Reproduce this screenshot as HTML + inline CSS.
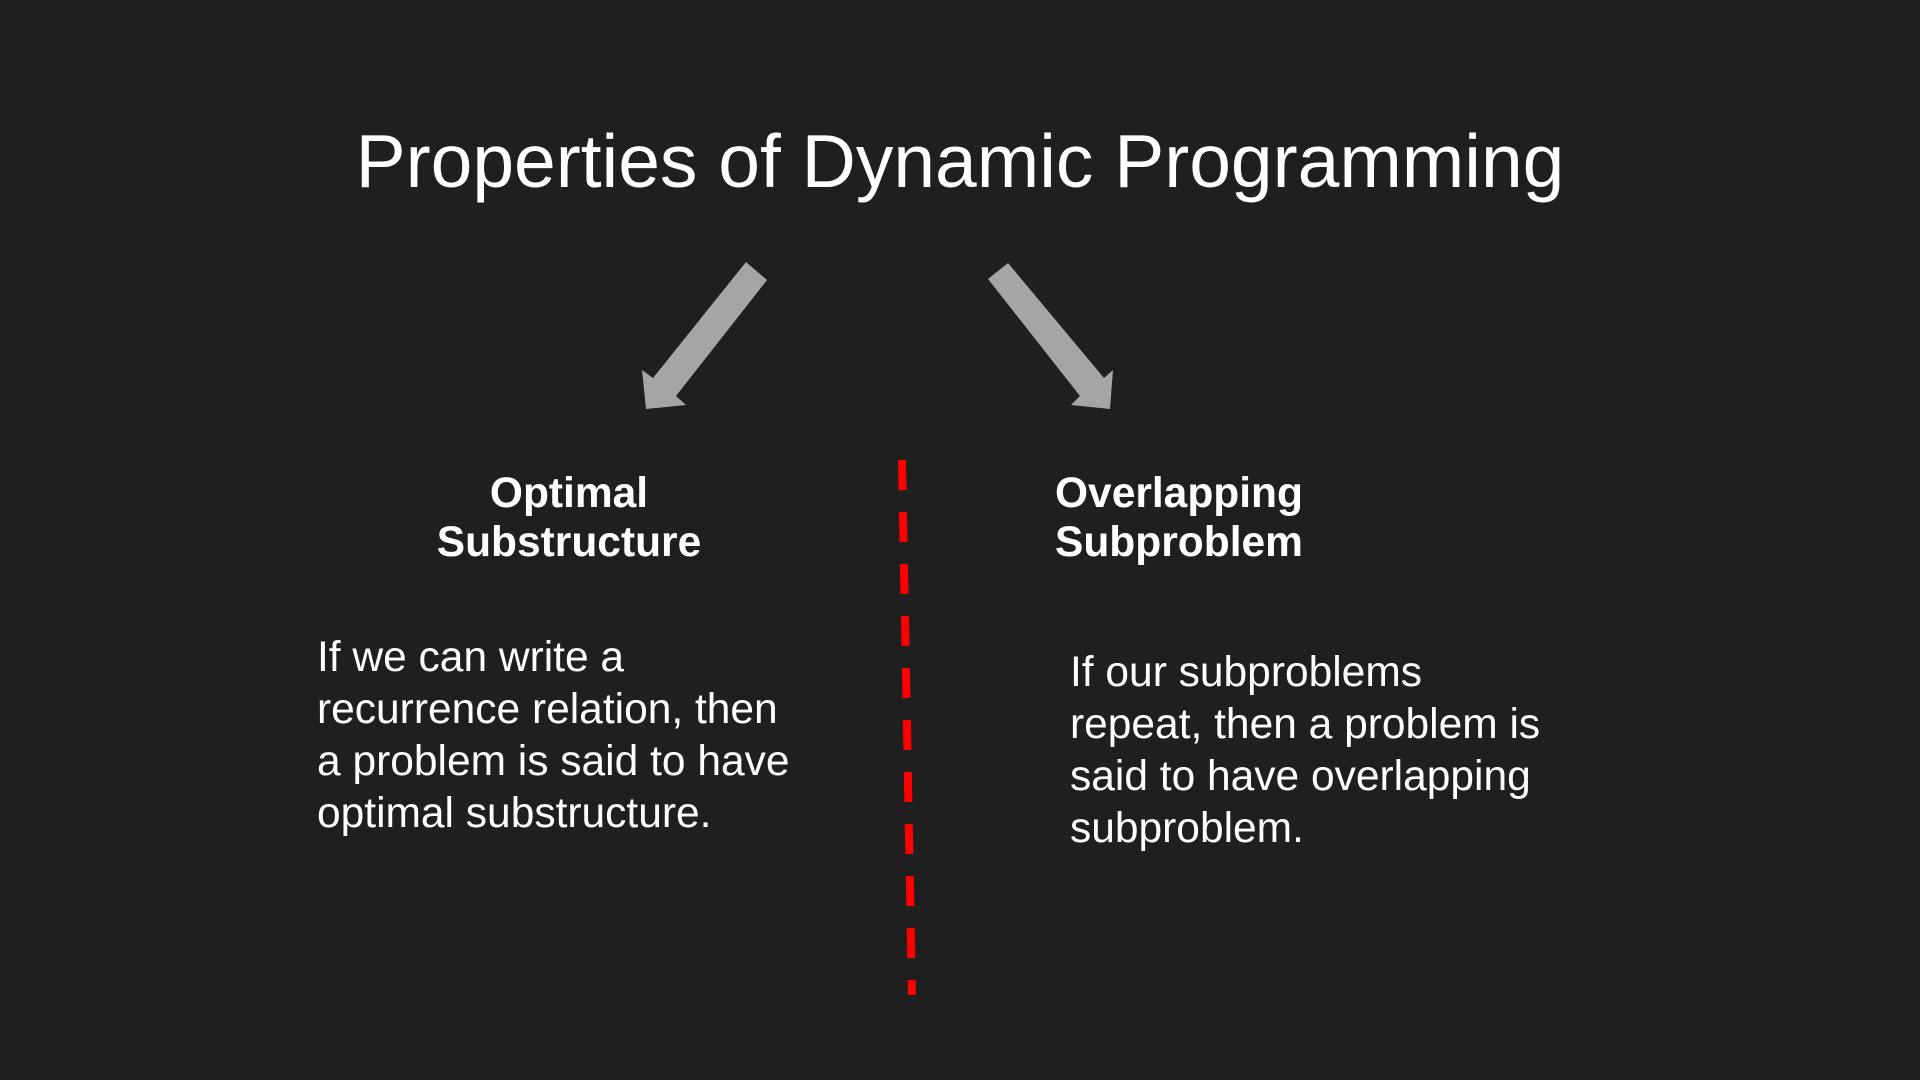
<!DOCTYPE html>
<html><head><meta charset="utf-8"><style>
html,body{margin:0;padding:0;}
body{width:1920px;height:1080px;background:#1f1f1f;position:relative;overflow:hidden;font-family:"Liberation Sans",Arial,sans-serif;color:#fff;}
.a{position:absolute;white-space:nowrap;}
.t{left:0;width:1920px;text-align:center;top:115px;font-size:75px;line-height:92px;}
.h{font-weight:bold;font-size:42.5px;line-height:49px;top:469px;}
.b{font-size:42.5px;line-height:52px;}
</style></head><body>
<div class="a t">Properties of Dynamic Programming</div>
<svg class="a" style="left:0;top:0" width="1920" height="1080">
<polygon points="746,262 767,280 676,396 686,405 646,409 642,370 653,378" fill="#a5a5a5"/>
<polygon points="1008,263 988,279 1080,396 1071,405 1110,409 1113,370 1104,378" fill="#a5a5a5"/>
<line x1="902" y1="460" x2="912" y2="995" stroke="#ff0000" stroke-width="8" stroke-dasharray="30 22"/>
</svg>
<div class="a h" style="left:369px;width:400px;text-align:center">Optimal<br>Substructure</div>
<div class="a h" style="left:1055px">Overlapping<br>Subproblem</div>
<div class="a b" style="left:317px;top:632px">If we can write a<br>recurrence relation, then<br>a problem is said to have<br>optimal substructure.</div>
<div class="a b" style="left:1070px;top:647px">If our subproblems<br>repeat, then a problem is<br>said to have overlapping<br>subproblem.</div>
</body></html>
